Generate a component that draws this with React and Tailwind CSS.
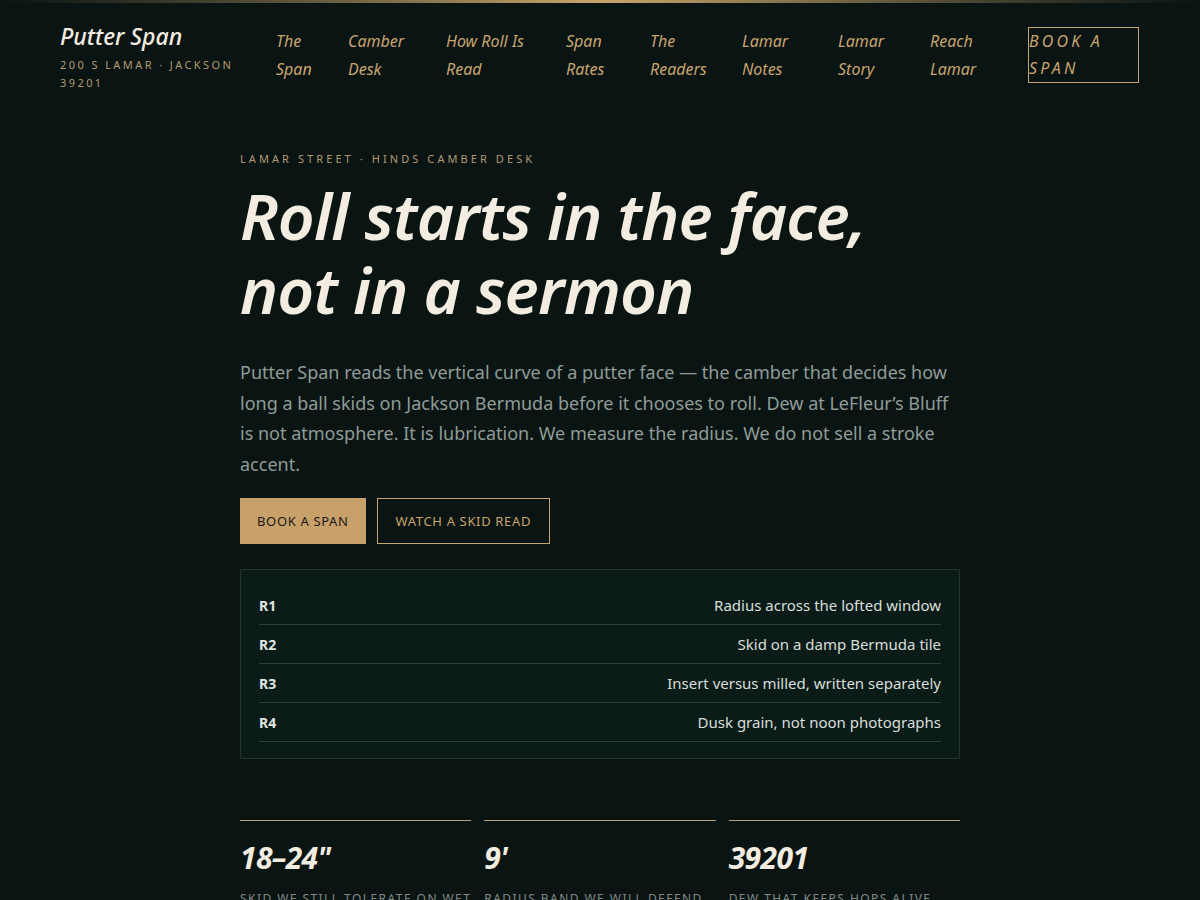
const nav = [
  ["The", "Span", "w-[72px]"],
  ["Camber", "Desk", "w-[98px]"],
  ["How Roll Is", "Read", "w-[120px]"],
  ["Span", "Rates", "w-[84px]"],
  ["The", "Readers", "w-[92px]"],
  ["Lamar", "Notes", "w-[96px]"],
  ["Lamar", "Story", "w-[92px]"],
  ["Reach", "Lamar", "w-[99px]"],
];

const rows = [
  ["R1", "Radius across the lofted window"],
  ["R2", "Skid on a damp Bermuda tile"],
  ["R3", "Insert versus milled, written separately"],
  ["R4", "Dusk grain, not noon photographs"],
];

const stats = [
  ["18–24\"", "Skid we still tolerate on wet"],
  ["9'", "Radius band we will defend"],
  ["39201", "Dew that keeps hops alive"],
];

function App() {
  return (
    <div className="min-h-screen bg-[#0a1413] font-['Noto_Sans',sans-serif] text-[#f3ece0]">
      <div className="h-[3px] bg-gradient-to-r from-[#0a1413] via-[#c9a56b] to-[#0a1413]" />

      <header className="flex items-start gap-[36px] px-[60px] pt-[17px]">
        <div className="w-[180px] shrink-0">
          <div className="text-[23px] italic font-medium leading-[32px] text-[#f3ece0]">Putter Span</div>
          <div className="mt-[4px] text-[11px] leading-[18px] tracking-[0.22em] text-[#b39b72]">
            200 S LAMAR · JACKSON 39201
          </div>
        </div>
        <nav className="flex pt-[7px]">
          {nav.map(([a, b, w]) => (
            <a key={a + b} href="#" className={`${w} shrink-0 text-[16px] italic leading-[28px] text-[#c8a46e]`}>
              {a}
              <br />
              {b}
            </a>
          ))}
          <a href="#" className="ml-[-1px] h-[56px] w-[111px] border border-[#c8a46e] text-[16px] italic leading-[27px] tracking-[0.2em] text-[#c8a46e]">
            BOOK A
            <br />
            SPAN
          </a>
        </nav>
      </header>

      <main className="mx-auto w-[720px] pt-[59px] pb-10">
        <div className="text-[11px] leading-[16px] tracking-[0.28em] text-[#b39b72]">
          LAMAR STREET · HINDS CAMBER DESK
        </div>
        <h1 className="mt-[12px] text-[64px] font-semibold italic leading-[74px] tracking-[-0.012em] text-[#f3ece0]">
          Roll starts in the face,
          <br />
          not in a sermon
        </h1>
        <p className="mt-[30px] text-[18px] leading-[30.6px] text-[#8f9c97]">
          Putter Span reads the vertical curve of a putter face — the camber that decides how long a ball skids on
          Jackson Bermuda before it chooses to roll. Dew at LeFleur’s Bluff is not atmosphere. It is lubrication. We
          measure the radius. We do not sell a stroke accent.
        </p>

        <div className="mt-[19px] flex gap-[11px]">
          <button className="h-[46px] bg-[#c8a06a] px-[17px] text-[13px] tracking-[0.05em] text-[#1a1a14]">
            BOOK A SPAN
          </button>
          <button className="h-[46px] border border-[#c8a46e] px-[18px] text-[13px] tracking-[0.05em] text-[#c8a46e]">
            WATCH A SKID READ
          </button>
        </div>

        <div className="mt-[25px] border border-[#24352f] bg-[#0b1c18] px-[18px] py-[16px]">
          {rows.map(([k, v]) => (
            <div key={k} className="flex h-[39px] items-center justify-between border-b border-[#2b3f39]">
              <span className="text-[14px] font-bold text-[#dfe6e1]">{k}</span>
              <span className="text-[15px] text-[#d9dfda]">{v}</span>
            </div>
          ))}
        </div>

        <div className="mt-[61px] grid grid-cols-3 gap-[13px]">
          {stats.map(([n, l]) => (
            <div key={n} className="border-t border-[#b9a078] pt-[18px]">
              <div className="text-[30px] font-bold italic leading-[38px] tracking-[-0.02em] text-[#f3ece0] [font-stretch:condensed]">
                {n}
              </div>
              <div className="mt-[13px] text-[12px] uppercase leading-[18px] tracking-[0.12em] text-[#7f8a86]">{l}</div>
            </div>
          ))}
        </div>
      </main>
    </div>
  );
}

export default App;
